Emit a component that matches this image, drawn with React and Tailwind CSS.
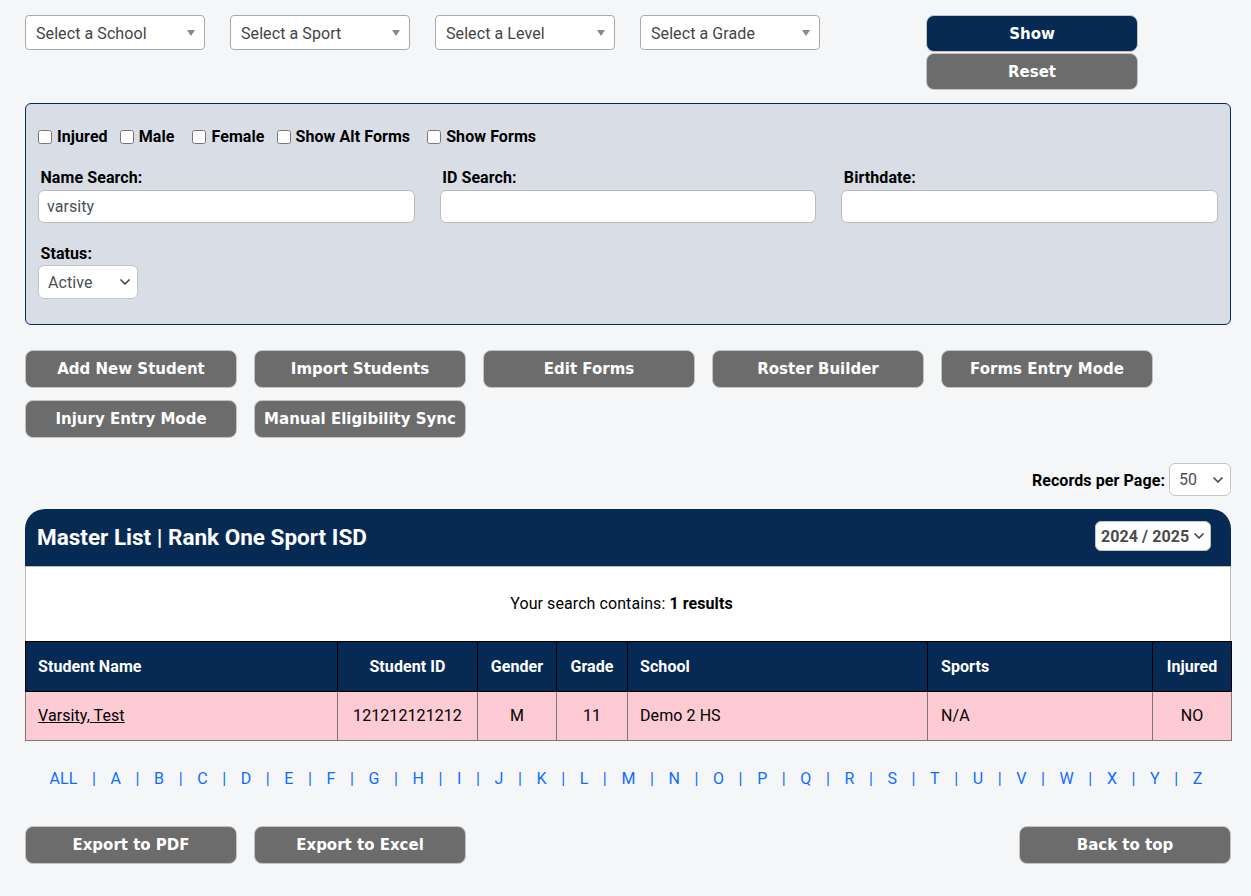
import { ChevronDown } from "lucide-react";

const filters = ["Select a School", "Select a Sport", "Select a Level", "Select a Grade"];
const checks = [
  { label: "Injured", cls: "mr-[12px]" },
  { label: "Male", cls: "mr-[18px]" },
  { label: "Female", cls: "mr-[12px]" },
  { label: "Show Alt Forms", cls: "mr-[17px]" },
  { label: "Show Forms", cls: "" },
];
const actions = [
  "Add New Student",
  "Import Students",
  "Edit Forms",
  "Roster Builder",
  "Forms Entry Mode",
  "Injury Entry Mode",
  "Manual Eligibility Sync",
];
const letters = ["ALL", ..."ABCDEFGHIJKLMNOPQRSTUVWXYZ"];

const GrayButton = ({ children }) => (
  <button className="w-[212px] h-[38px] rounded-lg border border-[#c4c4c4] bg-[#6c6c6c] text-white text-[15px] font-bold font-['DejaVu_Sans',sans-serif] tracking-normal">
    {children}
  </button>
);

const Filter = ({ label }) => (
  <div className="w-[180px] h-[35px] flex items-center justify-between pl-[10px] pr-[9px] bg-white border border-[#aaaaaa] rounded text-[16px] text-[#444444]">
    <span className="pt-[2px]">{label}</span>
    <span className="w-0 h-0 border-x-[4.5px] border-x-transparent border-t-[6px] border-t-[#888888]"></span>
  </div>
);

const TextField = ({ label, value }) => (
  <div className="flex-1">
    <label className="block pl-[2.5px] mb-[3px] text-[16px] leading-[19px] font-bold text-black">
      {label}
    </label>
    <div className="h-[33px] flex items-center px-[8px] bg-white border border-[#bbbbbb] rounded-md text-[16px] text-[#495057]">
      {value}
    </div>
  </div>
);

const SmallSelect = ({ label, width, height }) => (
  <div
    className={`${width} ${height} flex items-center justify-between pl-[9px] pr-[4px] bg-white border border-[#c4c4c4] rounded-md text-[16px] text-[#495057]`}
  >
    <span className="pt-[1px]">{label}</span>
    <ChevronDown size={16} strokeWidth={2.5} className="text-[#444444]" />
  </div>
);

export default function App() {
  return (
    <div className="min-h-[896px] bg-[#f5f6f8] pl-[25px] pr-[20px] pt-[15px] pb-[32px] font-[Roboto,sans-serif] tracking-[0.08px] text-black">
      {/* Top filters */}
      <div className="flex items-start">
        <div className="flex gap-[25px]">
          {filters.map((f) => (
            <Filter key={f} label={f} />
          ))}
        </div>
        <div className="ml-[106px] flex flex-col gap-px">
          <button className="w-[212px] h-[37px] pt-[2px] rounded-lg border border-[#c4c4c4] bg-[#062a54] text-white text-[15px] font-bold font-['DejaVu_Sans',sans-serif] tracking-normal">
            Show
          </button>
          <button className="w-[212px] h-[37px] pt-[2px] rounded-lg border border-[#c4c4c4] bg-[#6c6c6c] text-white text-[15px] font-bold font-['DejaVu_Sans',sans-serif] tracking-normal">
            Reset
          </button>
        </div>
      </div>

      {/* Search panel */}
      <div className="mt-[13px] h-[222px] rounded-md border border-[#062a54] bg-[#d9dde6] pt-[24px] px-[12px]">
        <div className="flex items-center h-[17px]">
          {checks.map((c) => (
            <label key={c.label} className={`flex items-center gap-[5px] text-[16px] font-bold ${c.cls}`}>
              <input type="checkbox" className="w-[14px] h-[14px] m-0" />
              {c.label}
            </label>
          ))}
        </div>
        <div className="flex gap-[25px] mt-[23px]">
          <TextField label="Name Search:" value="varsity" />
          <TextField label="ID Search:" value="" />
          <TextField label="Birthdate:" value="" />
        </div>
        <label className="block pl-[2.5px] mt-[21px] mb-[1px] text-[16px] leading-[20px] font-bold">Status:</label>
        <SmallSelect label="Active" width="w-[100px]" height="h-[34px]" />
      </div>

      {/* Action buttons */}
      <div className="mt-[25px] flex flex-wrap gap-x-[17px] gap-y-[12px]">
        {actions.map((a) => (
          <GrayButton key={a}>{a}</GrayButton>
        ))}
      </div>

      {/* Records per page */}
      <div className="mt-[25px] flex items-center justify-end gap-[4px]">
        <span className="mt-[2px] text-[16px] font-bold">Records per Page:</span>
        <SmallSelect label="50" width="w-[62px]" height="h-[33px]" />
      </div>

      {/* Master list */}
      <div className="mt-[13px]">
        <div className="h-[57px] flex items-center justify-between pl-[12px] pr-[20px] bg-[#062a54] rounded-t-[20px]">
          <h2 className="mt-[1px] text-[22.5px] tracking-normal font-bold text-white">Master List | Rank One Sport ISD</h2>
          <div className="mb-[3px] w-[116px] h-[30px] flex items-center justify-between pl-[5px] pr-[3px] bg-white border border-[#c4c4c4] rounded-md text-[16px] font-bold text-[#4a4a4a]">
            <span className="pt-[1px]">2024 / 2025</span>
            <ChevronDown size={16} strokeWidth={2.5} className="text-[#444444]" />
          </div>
        </div>
        <div className="h-[75px] flex items-center justify-center bg-white border-x border-t border-[#bbbbbb] text-[16px]">
          <span className="mr-[13px]">
            Your search contains: <b>1 results</b>
          </span>
        </div>
        <table className="w-full table-fixed border-collapse text-[16px]">
          <colgroup>
            <col className="w-[312px]" />
            <col className="w-[140px]" />
            <col className="w-[79px]" />
            <col className="w-[71px]" />
            <col className="w-[300px]" />
            <col className="w-[225px]" />
            <col className="w-[79px]" />
          </colgroup>
          <thead>
            <tr className="h-[50px] bg-[#062a54] text-white font-bold">
              <th className="border border-black pl-[12px] text-left">Student Name</th>
              <th className="border border-black text-center">Student ID</th>
              <th className="border border-black text-center">Gender</th>
              <th className="border border-black text-center">Grade</th>
              <th className="border border-black pl-[12px] text-left">School</th>
              <th className="border border-black pl-[13px] text-left">Sports</th>
              <th className="border border-black text-center">Injured</th>
            </tr>
          </thead>
          <tbody>
            <tr className="h-[49px] bg-[#fccbd3]">
              <td className="border border-[#777777] pl-[12px]">
                <a href="#" className="underline">Varsity, Test</a>
              </td>
              <td className="border border-[#777777] text-center">121212121212</td>
              <td className="border border-[#777777] text-center">M</td>
              <td className="border border-[#777777] text-center">11</td>
              <td className="border border-[#777777] pl-[12px]">Demo 2 HS</td>
              <td className="border border-[#777777] pl-[13px]">N/A</td>
              <td className="border border-[#777777] text-center">NO</td>
            </tr>
          </tbody>
        </table>
      </div>

      {/* Alphabet */}
      <div className="mt-[28px] mr-[4px] flex justify-center text-[16px] leading-[19px] text-[#0d6efd]">
        {letters.map((l, i) => (
          <span key={l} className="flex">
            <a href="#">{l}</a>
            {i < letters.length - 1 && <span className="mx-[14.52px]">|</span>}
          </span>
        ))}
      </div>

      {/* Bottom buttons */}
      <div className="mt-[38px] flex justify-between">
        <div className="flex gap-[17px]">
          <GrayButton>Export to PDF</GrayButton>
          <GrayButton>Export to Excel</GrayButton>
        </div>
        <GrayButton>Back to top</GrayButton>
      </div>
    </div>
  );
}
